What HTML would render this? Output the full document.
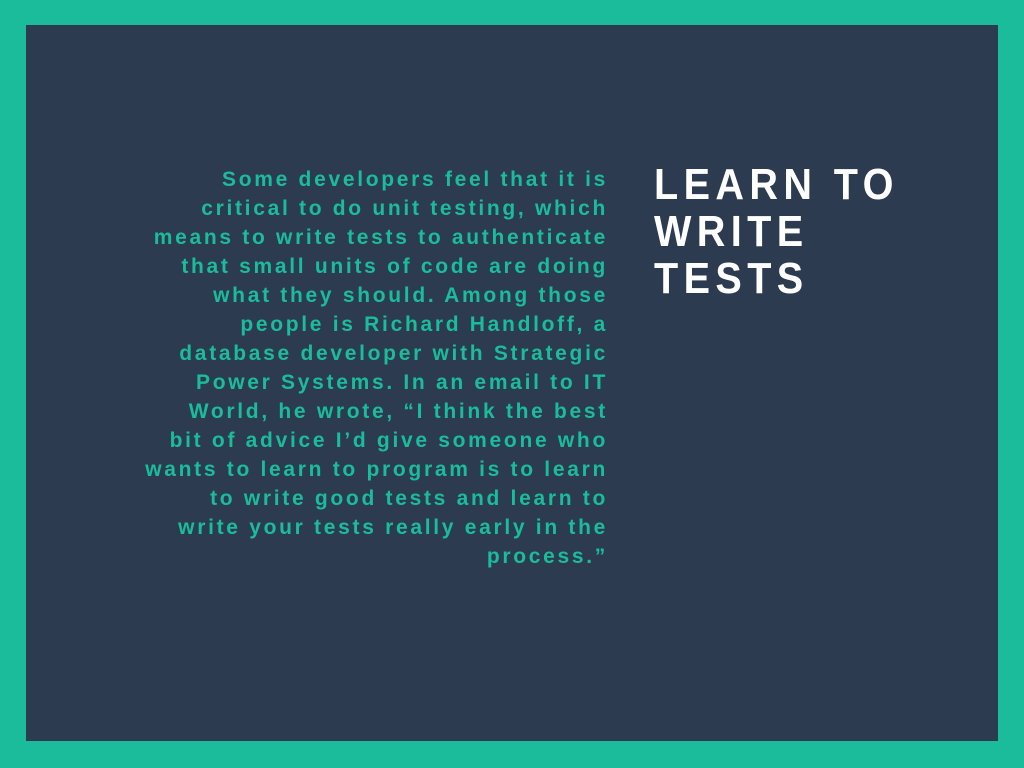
<!DOCTYPE html>
<html><head><meta charset="utf-8"><style>
html,body{margin:0;padding:0;}
body{width:1024px;height:768px;background:#1abc9c;position:relative;overflow:hidden;}
.panel{position:absolute;left:26px;top:25px;width:972px;height:716px;background:#2c3b4f;}
.body{position:absolute;right:416px;top:165px;text-align:right;font-family:"Liberation Sans",sans-serif;font-weight:bold;font-size:21px;line-height:29px;letter-spacing:2.7px;color:#1abc9c;white-space:nowrap;}
.head{position:absolute;left:654px;top:161px;font-family:"Liberation Sans",sans-serif;font-weight:bold;font-size:44px;line-height:47px;letter-spacing:6px;color:#fff;white-space:nowrap;transform:scaleX(0.9);transform-origin:left top;}
</style></head><body>
<div class="panel"></div>
<div class="body">Some developers feel that it is<br>critical to do unit testing, which<br>means to write tests to authenticate<br>that small units of code are doing<br>what they should. Among those<br>people is Richard Handloff, a<br>database developer with Strategic<br>Power Systems. In an email to IT<br>World, he wrote, “I think the best<br>bit of advice I’d give someone who<br>wants to learn to program is to learn<br>to write good tests and learn to<br>write your tests really early in the<br>process.”</div>
<div class="head">LEARN TO<br>WRITE<br>TESTS</div>
</body></html>
